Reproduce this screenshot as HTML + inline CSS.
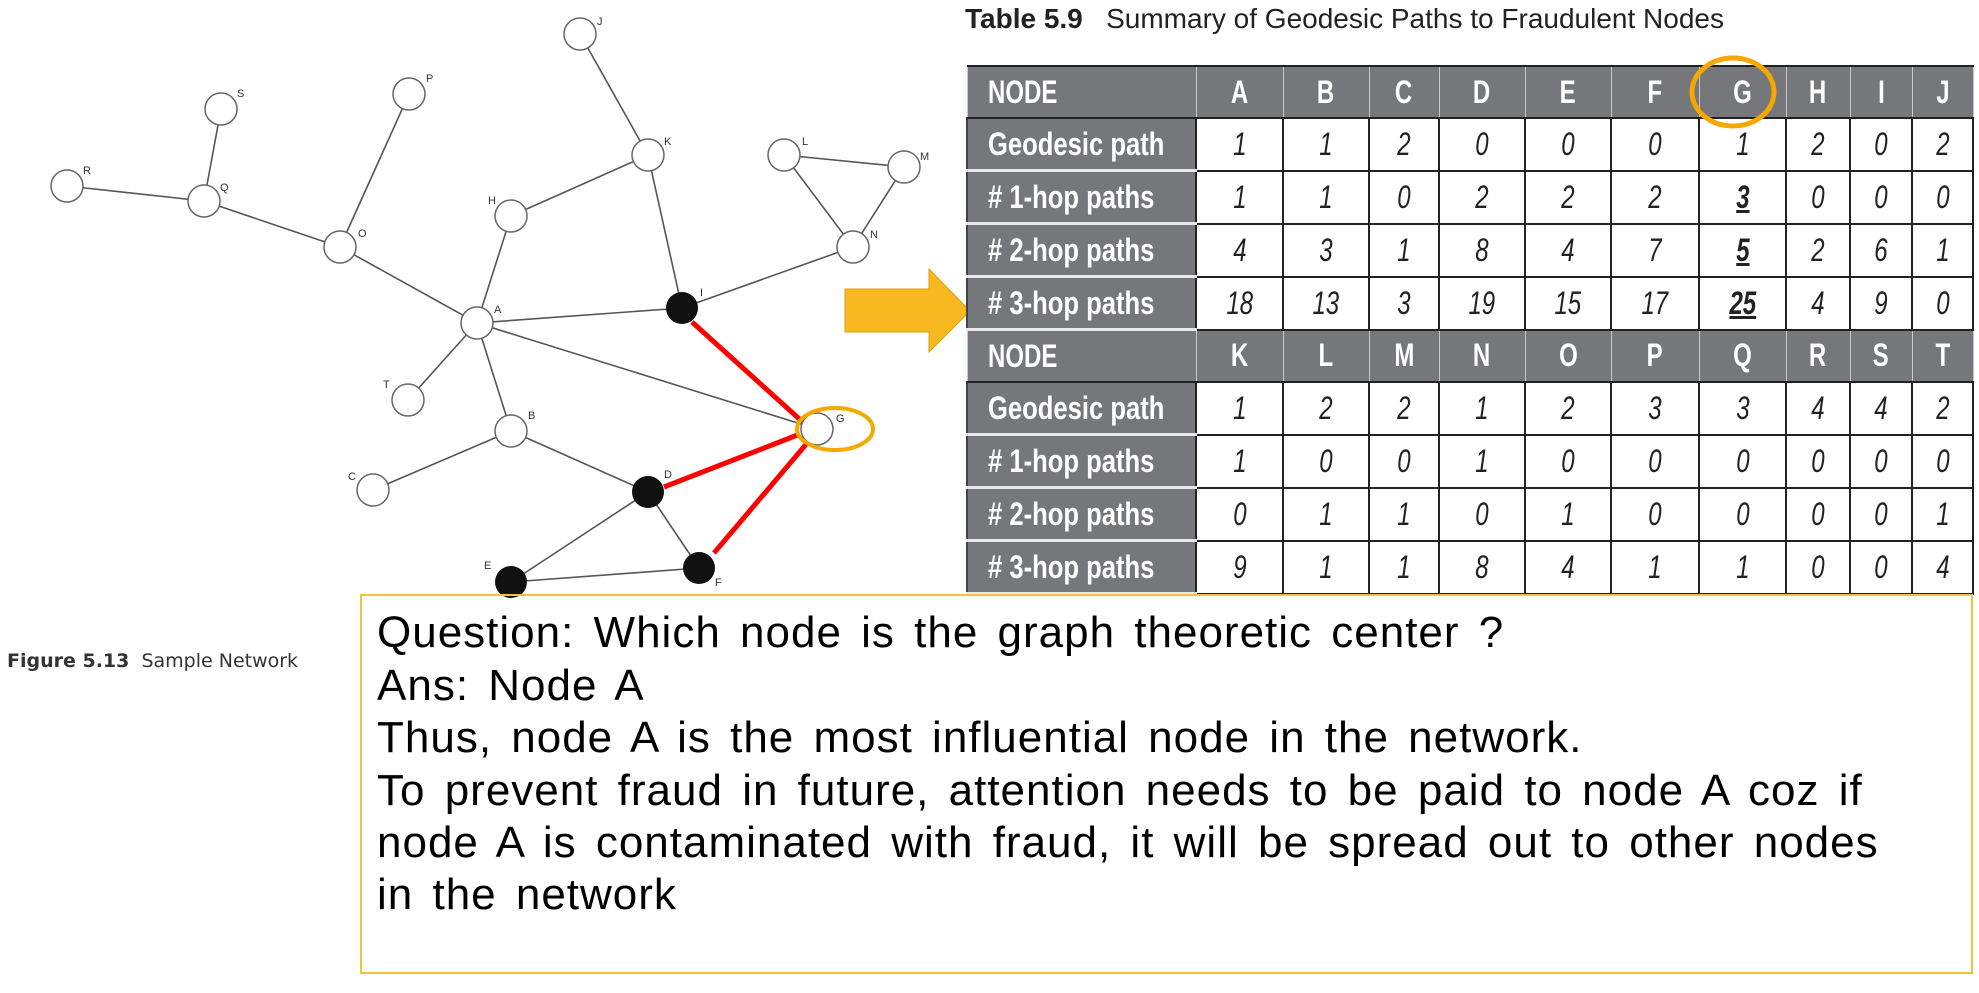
<!DOCTYPE html>
<html><head><meta charset="utf-8"><style>
body{margin:0;width:1979px;height:993px;background:#fff;position:relative;overflow:hidden;font-family:"Liberation Sans",sans-serif}
.abs{position:absolute}
table{border-collapse:collapse;position:absolute;left:966px;top:65px;table-layout:fixed;width:1006px}
td{height:50px;padding:0;text-align:center;border:2px solid #222;font-size:32px;font-style:italic;color:#222;overflow:hidden;white-space:nowrap}
td span{display:inline-block;transform:scaleX(.75)}
td.h{background:#76777b;color:#fff;font-weight:bold;font-style:normal;border:1px solid #c8c8c8;border-top:2px solid #222;border-bottom:2px solid #222}
td.l{background:#76777b;color:#fff;font-weight:bold;font-style:normal;text-align:left;border:none;border-bottom:3px solid #e8e8e8;border-left:2px solid #444;padding-left:20px}
td.l span{transform-origin:left center;transform:scaleX(.8)}
td u{text-decoration:underline;font-weight:bold}
.box{position:absolute;left:360px;top:594px;width:1613px;height:380px;border:2px solid #f2c23a;box-sizing:border-box}
.box div{position:absolute;left:15px;font-size:44px;white-space:nowrap;color:#000;letter-spacing:1px;word-spacing:6px}
</style></head><body>
<svg class="abs" style="left:0;top:0" width="980" height="600">
<g stroke="#555" stroke-width="1.6" fill="none">
<line x1="67" y1="186" x2="204" y2="201"/><line x1="221" y1="109" x2="204" y2="201"/>
<line x1="204" y1="201" x2="340" y2="247"/><line x1="409" y1="94" x2="340" y2="247"/>
<line x1="340" y1="247" x2="477" y2="323"/><line x1="511" y1="216" x2="477" y2="323"/>
<line x1="511" y1="216" x2="648" y2="155"/><line x1="648" y1="155" x2="580" y2="34"/>
<line x1="648" y1="155" x2="682" y2="308"/><line x1="682" y1="308" x2="853" y2="247"/>
<line x1="784" y1="155" x2="853" y2="247"/><line x1="784" y1="155" x2="904" y2="167"/><line x1="904" y1="167" x2="853" y2="247"/>
<line x1="477" y1="323" x2="682" y2="308"/><line x1="477" y1="323" x2="408" y2="400"/>
<line x1="477" y1="323" x2="511" y2="431"/><line x1="477" y1="323" x2="817" y2="429"/>
<line x1="511" y1="431" x2="373" y2="490"/><line x1="511" y1="431" x2="648" y2="492"/>
<line x1="648" y1="492" x2="511" y2="582"/><line x1="648" y1="492" x2="699" y2="568"/><line x1="511" y1="582" x2="699" y2="568"/>
</g>
<g stroke="#f00" stroke-width="5"><line x1="692" y1="322" x2="806" y2="425"/><line x1="664" y1="487" x2="800" y2="434"/><line x1="714" y1="553" x2="808" y2="442"/></g>
<g fill="#fff" stroke="#666" stroke-width="1.5">
<circle cx="580" cy="34" r="16"/><circle cx="409" cy="94" r="16"/><circle cx="221" cy="109" r="16"/><circle cx="67" cy="186" r="16"/><circle cx="204" cy="201" r="16"/><circle cx="648" cy="155" r="16"/><circle cx="784" cy="155" r="16"/><circle cx="511" cy="216" r="16"/><circle cx="340" cy="247" r="16"/><circle cx="853" cy="247" r="16"/><circle cx="904" cy="167" r="16"/><circle cx="477" cy="323" r="16"/><circle cx="408" cy="400" r="16"/><circle cx="817" cy="429" r="16"/><circle cx="511" cy="431" r="16"/><circle cx="373" cy="490" r="16"/>
</g>
<g fill="#111"><circle cx="682" cy="308" r="16"/><circle cx="648" cy="492" r="16"/><circle cx="699" cy="568" r="16"/><circle cx="511" cy="582" r="16"/></g>
<ellipse cx="835" cy="429" rx="38" ry="21" fill="none" stroke="#f5a800" stroke-width="4"/>
<g font-size="11" fill="#333" font-family="Liberation Sans">
<text x="597" y="25">J</text><text x="426" y="82">P</text><text x="237" y="97">S</text><text x="83" y="174">R</text><text x="220" y="191">Q</text><text x="664" y="145">K</text><text x="802" y="145">L</text><text x="488" y="204">H</text><text x="358" y="237">O</text><text x="870" y="238">N</text><text x="920" y="160">M</text><text x="700" y="296">I</text><text x="494" y="313">A</text><text x="383" y="388">T</text><text x="836" y="422">G</text><text x="528" y="419">B</text><text x="348" y="480">C</text><text x="664" y="478">D</text><text x="715" y="586">F</text><text x="484" y="569">E</text>
</g>
<polygon points="845,289 929,289 929,269 970,311 929,352 929,332 845,332" fill="#f7b820" stroke="#d9a010" stroke-width="1"/>
</svg>
<div class="abs" style="left:965px;top:3px;font-size:28px;white-space:nowrap;color:#222"><b>Table 5.9</b>&nbsp;&nbsp;&nbsp;Summary of Geodesic Paths to Fraudulent Nodes</div>
<table>
<colgroup><col style="width:229px"><col style="width:87px"><col style="width:86px"><col style="width:70px"><col style="width:86px"><col style="width:86px"><col style="width:88px"><col style="width:87px"><col style="width:64px"><col style="width:62px"><col style="width:61px"></colgroup>
<tr><td class="h" style="text-align:left;padding-left:20px"><span style="transform-origin:left">NODE</span></td><td class="h"><span>A</span></td><td class="h"><span>B</span></td><td class="h"><span>C</span></td><td class="h"><span>D</span></td><td class="h"><span>E</span></td><td class="h"><span>F</span></td><td class="h"><span>G</span></td><td class="h"><span>H</span></td><td class="h"><span>I</span></td><td class="h"><span>J</span></td></tr>
<tr><td class="l"><span>Geodesic path</span></td><td><span>1</span></td><td><span>1</span></td><td><span>2</span></td><td><span>0</span></td><td><span>0</span></td><td><span>0</span></td><td><span>1</span></td><td><span>2</span></td><td><span>0</span></td><td><span>2</span></td></tr>
<tr><td class="l"><span># 1-hop paths</span></td><td><span>1</span></td><td><span>1</span></td><td><span>0</span></td><td><span>2</span></td><td><span>2</span></td><td><span>2</span></td><td><span><u>3</u></span></td><td><span>0</span></td><td><span>0</span></td><td><span>0</span></td></tr>
<tr><td class="l"><span># 2-hop paths</span></td><td><span>4</span></td><td><span>3</span></td><td><span>1</span></td><td><span>8</span></td><td><span>4</span></td><td><span>7</span></td><td><span><u>5</u></span></td><td><span>2</span></td><td><span>6</span></td><td><span>1</span></td></tr>
<tr><td class="l"><span># 3-hop paths</span></td><td><span>18</span></td><td><span>13</span></td><td><span>3</span></td><td><span>19</span></td><td><span>15</span></td><td><span>17</span></td><td><span><u>25</u></span></td><td><span>4</span></td><td><span>9</span></td><td><span>0</span></td></tr>
<tr><td class="h" style="text-align:left;padding-left:20px"><span style="transform-origin:left">NODE</span></td><td class="h"><span>K</span></td><td class="h"><span>L</span></td><td class="h"><span>M</span></td><td class="h"><span>N</span></td><td class="h"><span>O</span></td><td class="h"><span>P</span></td><td class="h"><span>Q</span></td><td class="h"><span>R</span></td><td class="h"><span>S</span></td><td class="h"><span>T</span></td></tr>
<tr><td class="l"><span>Geodesic path</span></td><td><span>1</span></td><td><span>2</span></td><td><span>2</span></td><td><span>1</span></td><td><span>2</span></td><td><span>3</span></td><td><span>3</span></td><td><span>4</span></td><td><span>4</span></td><td><span>2</span></td></tr>
<tr><td class="l"><span># 1-hop paths</span></td><td><span>1</span></td><td><span>0</span></td><td><span>0</span></td><td><span>1</span></td><td><span>0</span></td><td><span>0</span></td><td><span>0</span></td><td><span>0</span></td><td><span>0</span></td><td><span>0</span></td></tr>
<tr><td class="l"><span># 2-hop paths</span></td><td><span>0</span></td><td><span>1</span></td><td><span>1</span></td><td><span>0</span></td><td><span>1</span></td><td><span>0</span></td><td><span>0</span></td><td><span>0</span></td><td><span>0</span></td><td><span>1</span></td></tr>
<tr><td class="l"><span># 3-hop paths</span></td><td><span>9</span></td><td><span>1</span></td><td><span>1</span></td><td><span>8</span></td><td><span>4</span></td><td><span>1</span></td><td><span>1</span></td><td><span>0</span></td><td><span>0</span></td><td><span>4</span></td></tr>
</table>
<svg class="abs" style="left:1680px;top:48px" width="110" height="90"><ellipse cx="53" cy="44" rx="41" ry="34" fill="none" stroke="#f5a800" stroke-width="5"/></svg>
<div class="abs" style="left:7px;top:650px;font-family:'DejaVu Sans',sans-serif;font-size:19px;color:#333;white-space:nowrap"><b>Figure 5.13</b>&nbsp; Sample Network</div>
<div class="box">
<div style="top:12px">Question: Which node is the graph theoretic center ?</div>
<div style="top:65px">Ans: Node A</div>
<div style="top:117px">Thus, node A is the most influential node in the network.</div>
<div style="top:170px">To prevent fraud in future, attention needs to be paid to node A coz if</div>
<div style="top:222px">node A is contaminated with fraud, it will be spread out to other nodes</div>
<div style="top:274px">in the network</div>
</div>
</body></html>
